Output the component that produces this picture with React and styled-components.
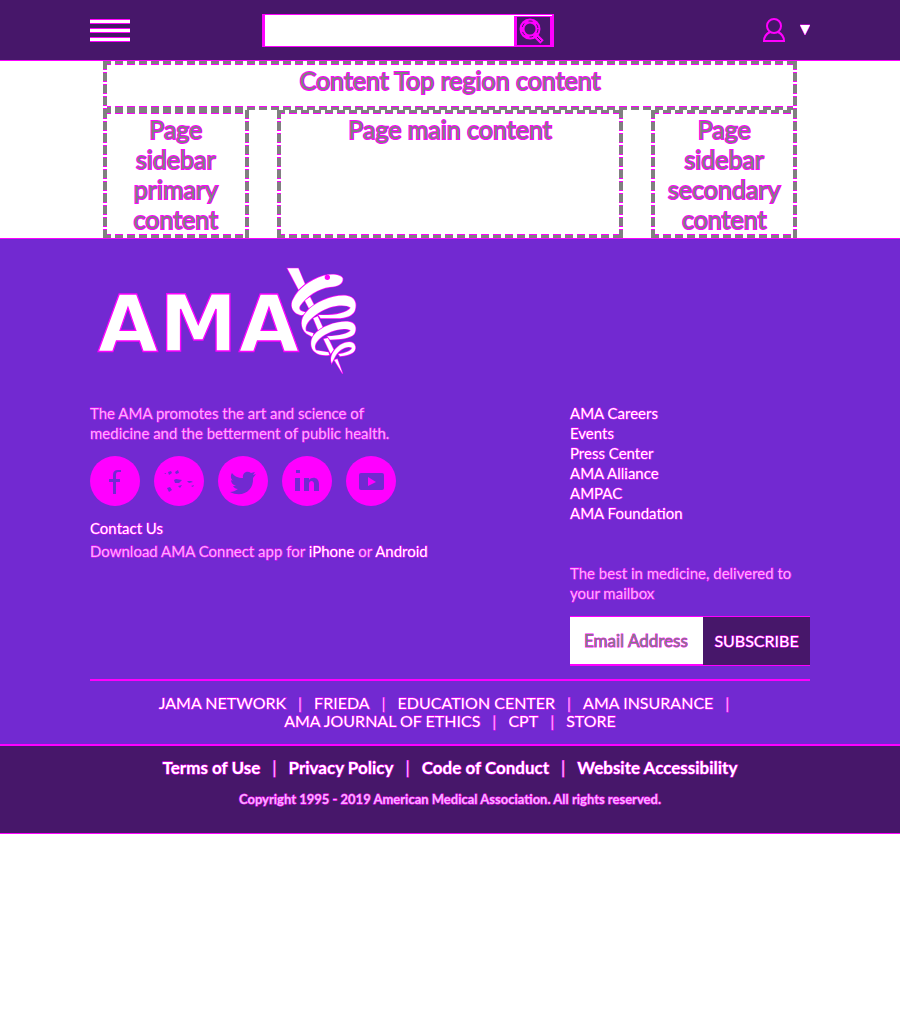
import React from "react";
import styled, { createGlobalStyle } from "styled-components";

const plum = "#47176a";
const violet = "#7229d1";
const pink = "#ff00ff";
const lilac = "#f0b4fa";

const GlobalStyle = createGlobalStyle`
  * { box-sizing: border-box; }
  body {
    margin: 0;
    background: #fff;
    font-family: Lato, "Open Sans", sans-serif;
    font-size: 15px;
    line-height: 20px;
    -webkit-text-stroke: 1px ${pink};
    paint-order: stroke fill;
  }
  ul, p { margin: 0; padding: 0; list-style: none; }
  a { color: #fff; text-decoration: none; }
  button, input { font: inherit; border-radius: 0; }
  svg { display: block; }
`;

const Header = styled.header`
  display: flex;
  align-items: center;
  justify-content: space-between;
  height: 61px;
  padding: 0 10%;
  background: ${plum};
  border-bottom: 1px solid ${pink};
`;

const MenuButton = styled.button`
  display: flex;
  flex-direction: column;
  gap: 4px;
  width: 40px;
  padding: 0;
  border: 0;
  background: none;
`;

const MenuBar = styled.span`
  height: 5px;
  background: #fff;
  border: solid ${pink};
  border-width: 1px 0;
`;

const SearchForm = styled.form`
  display: flex;
  width: 292px;
  height: 33px;
  background: #fff;
  border: solid ${pink};
  border-width: 1px 2px 1px 3px;
`;

const SearchInput = styled.input`
  flex: 1;
  min-width: 0;
  padding: 0 8px;
  border: 0;
  outline: 0;
  background: #fff;
  font-size: 16px;
`;

const SearchButton = styled.button`
  width: 38px;
  margin-top: 1px;
  padding: 0 0 0 2px;
  background: ${plum};
  border: solid ${pink};
  border-width: 1px 2px 1px 3px;
`;

const AccountButton = styled.button`
  display: flex;
  align-items: center;
  gap: 14px;
  padding: 0;
  border: 0;
  background: none;
`;

const AccountArea = styled.div`
  display: flex;
  justify-content: flex-end;
  width: 124px;
`;

const Main = styled.main`
  display: grid;
  grid-template-columns: 21fr 50fr 21fr;
  column-gap: 28px;
  padding: 0 103px;
`;

const dashH = (c) => `repeating-linear-gradient(90deg, ${c} 0 8px, transparent 8px 12px)`;
const dashV = `repeating-linear-gradient(180deg, #808080 0 8px, ${pink} 8px 9px, #fff 9px 11px, ${pink} 11px 12px)`;

const Region = styled.section`
  grid-column: ${(p) => (p.$wide ? "1 / -1" : "auto")};
  min-height: ${(p) => (p.$wide ? "49px" : "128px")};
  padding: 4px 12px;
  color: #808080;
  font-size: 25px;
  line-height: 30px;
  text-align: center;
  -webkit-text-stroke: 2px ${pink};
  background:
    ${dashV} left / 4px 100% no-repeat,
    ${dashV} right / 4px 100% no-repeat,
    ${dashH(pink)} 0 3px / 100% 1px no-repeat,
    ${dashH("#808080")} top / 100% 4px no-repeat,
    ${dashH(pink)} 0 calc(100% - 3px) / 100% 1px no-repeat,
    ${dashH("#808080")} bottom / 100% 4px no-repeat;
`;

const Footer = styled.footer`
  background: ${violet};
  border-top: 1px solid ${pink};
`;

const FooterInner = styled.div`
  margin: 0 10%;
  padding-top: 26px;
  border-bottom: 2px solid ${pink};
`;

const Columns = styled.div`
  display: flex;
  justify-content: space-between;
  padding: 25px 0 13px;
`;

const About = styled.div`
  color: ${lilac};
`;

const Blurb = styled.p`
  max-width: 320px;
`;

const SocialList = styled.ul`
  display: flex;
  gap: 14px;
  margin: 13px 0 12px;
`;

const SocialLink = styled.a`
  display: block;
  width: 50px;
  height: 50px;
  border-radius: 50%;
  background: ${pink};
`;

const ContactLine = styled.p`
  margin-bottom: 3px;
`;

const Aside = styled.div`
  width: 240px;
  color: ${lilac};
`;

const Signup = styled.form`
  display: flex;
  height: 50px;
  margin-top: 13px;
  border: solid ${pink};
  border-width: 1px 0;
`;

const MailLabel = styled.label`
  display: block;
  margin-top: 40px;
`;

const MailInput = styled.input`
  flex: 1;
  min-width: 0;
  padding: 0 14px;
  border: 0;
  border-bottom: 1px solid ${pink};
  background: #fff;
  font-size: 17px;
  &::placeholder { color: #808080; opacity: 1; }
`;

const SubscribeButton = styled.button`
  width: 107px;
  padding: 0;
  border: 0;
  background: ${plum};
  color: #fff;
  font-size: 16px;
`;

const LinkRow = styled.ul`
  margin: 0 10%;
  font-size: ${(p) => (p.$large ? "17px" : "16px")};
  line-height: 18px;
  text-align: center;
`;

const LinkItem = styled.li`
  display: inline-block;
  color: ${lilac};
  &:not(:last-child)::after {
    content: "|";
    margin: 0 12px;
    font-weight: 400;
  }
`;

const Network = styled.nav`
  padding: 13px 0 14px;
  border-bottom: 2px solid ${pink};
`;

const Legal = styled.div`
  padding: 13px 0 24px;
  background: ${plum};
  border-bottom: 1px solid ${pink};
  color: ${lilac};
  font-size: 13px;
  font-weight: 700;
  text-align: center;
`;

const Copyright = styled.p`
  margin-top: 12px;
`;

const Wordmark = styled.g`
  font-family: "DejaVu Sans", sans-serif;
  font-size: 234px;
  font-weight: 700;
  text-anchor: middle;
  paint-order: normal;
`;

const Logo = () => (
  <svg width="270" height="113" viewBox="30 30 810 339" role="img" aria-label="AMA" fill="#fff" stroke={pink} strokeWidth="4">
    <Wordmark>
      <text x="144" y="288">A</text>
      <text x="355" y="288">M</text>
      <text x="567" y="288">A</text>
    </Wordmark>
    <path d="M622 40H655L675 88 656 104Z" />
    <path d="M674 136 690 126 702 150 690 166Z" />
    <path d="M700 190 713 184 729 219 716 229Z" />
    <path d="M731 252 744 249 761 284 752 296Z" />
    <path d="M763 315 772 312 788 356Z" />
    <path d="M655 178C635 170 630 148 640 132 655 100 690 75 730 62 755 56 781 58 788 70 790 86 775 95 750 96 715 100 680 124 660 152 654 163 662 170 680 172 672 182 660 182 655 178Z" />
    <path d="M680 236C660 220 660 190 680 170 705 140 760 118 800 122 825 126 831 145 825 165 820 181 800 190 770 190H722L715 180C760 182 800 175 812 158 796 146 750 150 715 174 685 195 673 212 678 228L700 235 698 246Z" />
    <path d="M705 291C690 280 690 255 702 240 725 212 780 195 810 201 830 206 830 225 822 238 810 250 780 254 750 254L742 244C780 242 805 236 812 226 790 215 745 228 720 250 704 265 702 276 708 286L745 292 748 300C730 302 715 300 705 291Z" />
    <path d="M755 325C748 305 760 285 780 270 800 258 822 256 826 275 828 290 815 300 780 304L775 297C795 294 814 288 816 278 800 270 775 285 765 305Z" />
    <circle cx="742" cy="67" r="6" fill={pink} />
  </svg>
);

const SearchIcon = () => (
  <svg width="26" height="26" viewBox="0 0 26 26" fill="none" stroke={pink}>
    <circle cx="11" cy="11" r="8" strokeWidth="5" />
    <circle cx="11" cy="11" r="8" stroke={plum} strokeWidth="1" strokeDasharray="4 5" />
    <path d="M16 17l7 7" strokeWidth="5" />
    <path d="M18 19l4 4" stroke={plum} strokeWidth="1" />
  </svg>
);

const UserIcon = () => (
  <svg width="24" height="26" viewBox="0 0 24 26" fill="none" stroke={pink} strokeWidth="2">
    <circle cx="12" cy="9" r="7" />
    <path d="M8 15C4 17 2 20 2 24H22C22 20 20 17 16 15" />
  </svg>
);

const social = [
  {
    name: "Facebook",
    art: <path d="M23 38V26H19V23H23V19Q23 14 28 14H31V16H28Q26 16 26 19V23H30V26H26V38Z" />,
  },
  {
    name: "Google Plus",
    art: (
      <path d="M14 16l3-1 1 2-3 2zM21 16l3-2 1 3-3 1zM20 24l2-1 6 1-3 3-4 0zM13 32l3-1 2 3-3 2zM24 30l4-1-2 3zM33 25l4 0 2 1-4 1zM37 30l3-1-1 2zM10 18l2-1v1z" />
    ),
  },
  {
    name: "Twitter",
    art: (
      <path d="M38 18l-3 1 2-3-4 1c-4-3-9 0-8 5-5 0-9-2-11-5-2 3-1 6 1 8l-2-1c0 3 2 5 5 6h-3c1 2 3 3 5 3-3 2-5 3-8 3 12 6 24-1 23-14z" />
    ),
  },
  {
    name: "LinkedIn",
    art: (
      <path d="M14 14h4v3h-4zM13 22h5v13h-5zM22 22h5v2c3-4 10-3 10 4v7h-5v-7c0-4-5-4-5 0v7h-5z" />
    ),
  },
  {
    name: "YouTube",
    art: (
      <>
        <rect x="13" y="17" width="25" height="17" rx="2" />
        <path d="M22 21v9l8-4z" fill={pink} />
      </>
    ),
  },
];

const siteLinks = ["AMA Careers", "Events", "Press Center", "AMA Alliance", "AMPAC", "AMA Foundation"];
const networkLinks = ["JAMA NETWORK", "FRIEDA", "EDUCATION CENTER", "AMA INSURANCE", "AMA JOURNAL OF ETHICS", "CPT", "STORE"];
const legalLinks = ["Terms of Use", "Privacy Policy", "Code of Conduct", "Website Accessibility"];

const Links = ({ items, large }) => (
  <LinkRow $large={large}>
    {items.map((t) => (
      <LinkItem key={t}><a href="#">{t}</a></LinkItem>
    ))}
  </LinkRow>
);

export default function App() {
  return (
    <>
      <GlobalStyle />
      <Header>
        <MenuButton aria-label="Menu"><MenuBar /><MenuBar /><MenuBar /></MenuButton>
        <SearchForm role="search">
          <SearchInput type="text" aria-label="Search" />
          <SearchButton type="button" aria-label="Submit search"><SearchIcon /></SearchButton>
        </SearchForm>
        <AccountArea>
          <AccountButton aria-label="Account">
            <UserIcon />
            <svg width="10" height="12" viewBox="0 0 10 12"><path d="M0 1h10L5 11z" fill="#fff" stroke={pink} /></svg>
          </AccountButton>
        </AccountArea>
      </Header>
      <Main>
        <Region $wide>Content Top region content</Region>
        <Region>Page sidebar primary content</Region>
        <Region>Page main content</Region>
        <Region>Page sidebar secondary content</Region>
      </Main>
      <Footer>
        <FooterInner>
          <Logo />
          <Columns>
            <About>
              <Blurb>The AMA promotes the art and science of medicine and the betterment of public health.</Blurb>
              <SocialList>
                {social.map((s) => (
                  <li key={s.name}>
                    <SocialLink href="#" aria-label={s.name}>
                      <svg width="50" height="50" viewBox="0 0 50 50" fill={violet}>{s.art}</svg>
                    </SocialLink>
                  </li>
                ))}
              </SocialList>
              <ContactLine><a href="#">Contact Us</a></ContactLine>
              <p>Download AMA Connect app for <a href="#">iPhone</a> or <a href="#">Android</a></p>
            </About>
            <Aside>
              <ul>
                {siteLinks.map((t) => (
                  <li key={t}><a href="#">{t}</a></li>
                ))}
              </ul>
              <MailLabel htmlFor="email">The best in medicine, delivered to your mailbox</MailLabel>
              <Signup>
                <MailInput id="email" type="email" placeholder="Email Address" />
                <SubscribeButton type="button">SUBSCRIBE</SubscribeButton>
              </Signup>
            </Aside>
          </Columns>
        </FooterInner>
        <Network aria-label="AMA network"><Links items={networkLinks} /></Network>
        <Legal>
          <Links items={legalLinks} large />
          <Copyright>Copyright 1995 - 2019 American Medical Association. All rights reserved.</Copyright>
        </Legal>
      </Footer>
    </>
  );
}
